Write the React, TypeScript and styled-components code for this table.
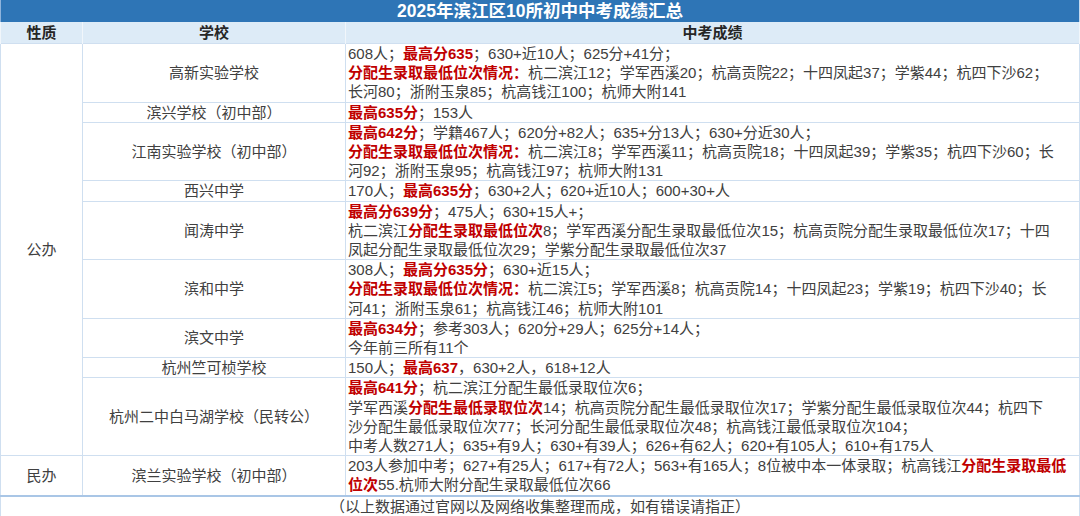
import styled, { createGlobalStyle } from 'styled-components'

type Seg = { text: string; hi?: boolean }
type Row = { school: string; lines: Seg[][] }

const t = (text: string): Seg => ({ text })
const r = (text: string): Seg => ({ text, hi: true })

const publicRows: Row[] = [
	{
		school: '高新实验学校',
		lines: [
			[t('608人；'), r('最高分635'), t('；630+近10人；625分+41分；')],
			[r('分配生录取最低位次情况：'), t('杭二滨江12；学军西溪20；杭高贡院22；十四凤起37；学紫44；杭四下沙62；')],
			[t('长河80；浙附玉泉85；杭高钱江100；杭师大附141')],
		],
	},
	{
		school: '滨兴学校（初中部）',
		lines: [[r('最高635分'), t('；153人')]],
	},
	{
		school: '江南实验学校（初中部）',
		lines: [
			[r('最高642分'), t('；学籍467人；620分+82人；635+分13人；630+分近30人；')],
			[r('分配生录取最低位次情况：'), t('杭二滨江8；学军西溪11；杭高贡院18；十四凤起39；学紫35；杭四下沙60；长')],
			[t('河92；浙附玉泉95；杭高钱江97；杭师大附131')],
		],
	},
	{
		school: '西兴中学',
		lines: [[t('170人；'), r('最高635分'), t('；630+2人；620+近10人；600+30+人')]],
	},
	{
		school: '闻涛中学',
		lines: [
			[r('最高分639分'), t('；475人；630+15人+；')],
			[t('杭二滨江'), r('分配生录取最低位次'), t('8；学军西溪分配生录取最低位次15；杭高贡院分配生录取最低位次17；十四')],
			[t('凤起分配生录取最低位次29；学紫分配生录取最低位次37')],
		],
	},
	{
		school: '滨和中学',
		lines: [
			[t('308人；'), r('最高分635分'), t('；630+近15人；')],
			[r('分配生录取最低位次情况：'), t('杭二滨江5；学军西溪8；杭高贡院14；十四凤起23；学紫19；杭四下沙40；长')],
			[t('河41；浙附玉泉61；杭高钱江46；杭师大附101')],
		],
	},
	{
		school: '滨文中学',
		lines: [
			[r('最高634分'), t('；参考303人；620分+29人；625分+14人；')],
			[t('今年前三所有11个')],
		],
	},
	{
		school: '杭州竺可桢学校',
		lines: [[t('150人；'), r('最高637'), t('，630+2人，618+12人')]],
	},
	{
		school: '杭州二中白马湖学校（民转公）',
		lines: [
			[r('最高641分'), t('；杭二滨江分配生最低录取位次6；')],
			[t('学军西溪'), r('分配生最低录取位次'), t('14；杭高贡院分配生最低录取位次17；学紫分配生最低录取位次44；杭四下')],
			[t('沙分配生最低录取位次77；长河分配生最低录取位次48；杭高钱江最低录取位次104；')],
			[t('中考人数271人；635+有9人；630+有39人；626+有62人；620+有105人；610+有175人')],
		],
	},
]

const privateRow: Row = {
	school: '滨兰实验学校（初中部）',
	lines: [
		[t('203人参加中考；627+有25人；617+有72人；563+有165人；8位被中本一体录取；杭高钱江'), r('分配生录取最低')],
		[r('位次'), t('55.杭师大附分配生录取最低位次66')],
	],
}

const Score = ({ lines }: { lines: Seg[][] }) => (
	<ScoreCell>
		{lines.map((line, i) => (
			<Line key={i}>
				{line.map((seg, j) => (seg.hi ? <Hi key={j}>{seg.text}</Hi> : <span key={j}>{seg.text}</span>))}
			</Line>
		))}
	</ScoreCell>
)

const App = () => {
	return (
		<>
			<GlobalStyle />
			<Table>
				<colgroup>
					<col style={{ width: 82 }} />
					<col style={{ width: 263 }} />
					<col />
				</colgroup>
				<thead>
					<tr>
						<TitleCell colSpan={3}>2025年滨江区10所初中中考成绩汇总</TitleCell>
					</tr>
					<tr>
						<HeadCell>性质</HeadCell>
						<HeadCell>学校</HeadCell>
						<HeadCell>中考成绩</HeadCell>
					</tr>
				</thead>
				<tbody>
					{publicRows.map((row, i) => (
						<tr key={row.school}>
							{i === 0 && <TypeCell rowSpan={publicRows.length}>公办</TypeCell>}
							<SchoolCell>{row.school}</SchoolCell>
							<Score lines={row.lines} />
						</tr>
					))}
					<tr>
						<TypeCell>民办</TypeCell>
						<SchoolCell>{privateRow.school}</SchoolCell>
						<Score lines={privateRow.lines} />
					</tr>
					<tr>
						<FooterCell colSpan={3}>（以上数据通过官网以及网络收集整理而成，如有错误请指正）</FooterCell>
					</tr>
				</tbody>
			</Table>
		</>
	)
}

export default App

const GlobalStyle = createGlobalStyle`
	html, body {
		margin: 0;
		padding: 0;
		background: #ffffff;
	}
	body {
		width: 1080px;
		height: 516px;
		overflow: hidden;
		font-family: 'Liberation Sans', 'Noto Sans CJK SC', sans-serif;
	}
`

const Table = styled.table`
	width: 1080px;
	table-layout: fixed;
	border-collapse: collapse;
	border-left: 1px solid #8fb4dc;
	border-right: 1px solid #c5d9ee;
	color: #404040;
	font-size: 15px;
	line-height: 19.2px;

	td,
	th {
		padding: 0;
		border: 1px solid #cfdff0;
	}
`

const TitleCell = styled.th`
	height: 22px;
	background: #2e75b6;
	color: #ffffff;
	font-size: 17.5px;
	font-weight: 700;
	line-height: 22px;
	text-align: center;
	&& {
		border: none;
	}
`

const HeadCell = styled.th`
	height: 21px;
	background: #ddebf7;
	color: #262626;
	font-size: 15px;
	font-weight: 700;
	text-align: center;
	&& {
		border-top: none;
		border-bottom: none;
		border-color: #f1f6fb;
	}
`

const TypeCell = styled.td`
	text-align: center;
	vertical-align: middle;
`

const SchoolCell = styled.td`
	text-align: center;
	vertical-align: middle;
	white-space: nowrap;
`

const ScoreCell = styled.td`
	vertical-align: middle;
	&& {
		padding: 0 2px;
	}
`

const Line = styled.div`
	white-space: nowrap;
`

const Hi = styled.span`
	color: #c00000;
	font-weight: 700;
`

const FooterCell = styled.td`
	height: 19px;
	text-align: center;
	line-height: 19px;
	&& {
		border-top: 2px solid #a9c6e6;
	}
`
